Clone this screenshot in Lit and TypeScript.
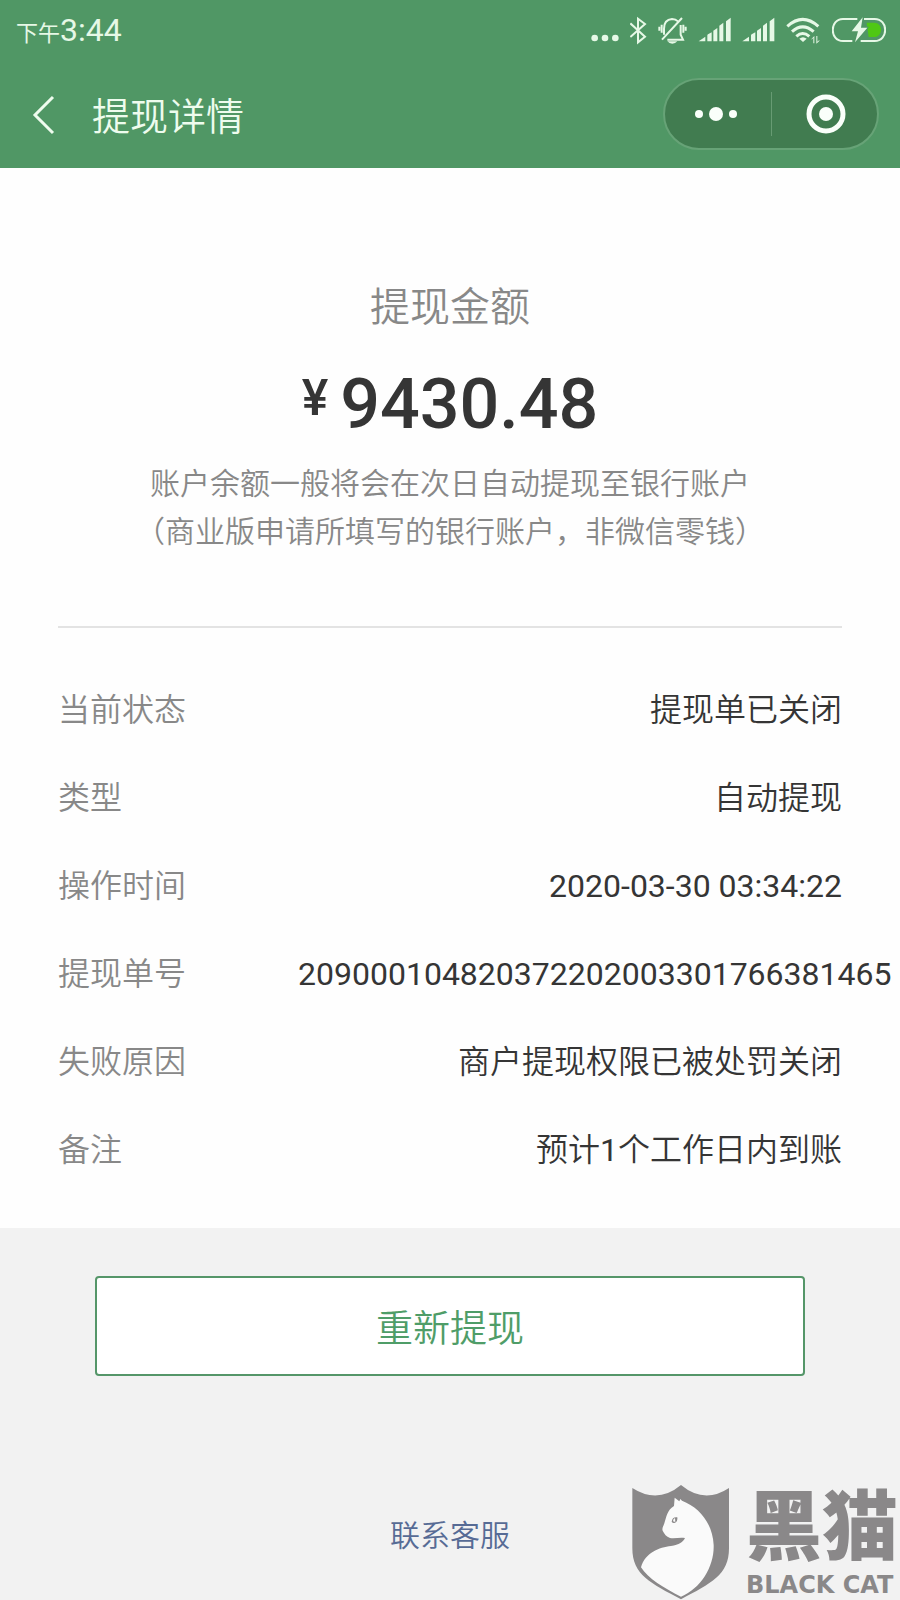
import { LitElement, html, css, svg } from "lit";
import type { TemplateResult } from "lit";
import { customElement } from "lit/decorators.js";

interface Detail {
  label: string;
  value: TemplateResult;
}

const num = (text: string) => html`<span class="num">${text}</span>`;

const DETAILS: Detail[] = [
  { label: "当前状态", value: html`提现单已关闭` },
  { label: "类型", value: html`自动提现` },
  { label: "操作时间", value: num("2020-03-30 03:34:22") },
  { label: "提现单号", value: num("209000104820372202003301766381465") },
  { label: "失败原因", value: html`商户提现权限已被处罚关闭` },
  { label: "备注", value: html`预计${num("1")}个工作日内到账` },
];

const signalBars = (x: number) => svg`
  <path d="M${x} 124 l20 -14 v14z"/>
  <path d="M${x + 26} 124 v-18 q0 -2 2 -3 l11 -6 v27z"/>
  <path d="M${x + 44} 124 v-32 l12 -8 v40z"/>
  <path d="M${x + 62} 124 v-47 l12 -9 v56z"/>
  <path d="M${x + 82} 124 v-60 l14 -11 v71z"/>`;

@customElement("status-bar")
export class StatusBar extends LitElement {
  static styles = css`
    :host {
      display: flex;
      align-items: center;
      justify-content: space-between;
      height: 60px;
      padding: 0 14px 0 16px;
      color: #e6f8e6;
    }
    .time {
      display: flex;
      align-items: baseline;
      padding-top: 4px;
      font-size: 32px;
      line-height: 36px;
    }
    .period {
      font-size: 22px;
    }
    .icons {
      display: flex;
      gap: 11px;
    }
    svg {
      display: block;
      height: 30px;
      fill: currentColor;
    }
    .line {
      fill: none;
      stroke: currentColor;
      stroke-width: 6;
    }
    .waves {
      fill: none;
      stroke: currentColor;
      stroke-width: 9;
    }
    .charge {
      fill: #4fc814;
    }
    .cut {
      stroke: #509765;
      stroke-width: 5;
    }
  `;

  render() {
    return html`
      <div class="time"><span class="period">下午</span><span>3:44</span></div>
      <div class="icons" aria-hidden="true">
        <svg width="28" viewBox="36 45 84 90">
          <circle cx="47" cy="114" r="10" /><circle cx="78" cy="114" r="10" /><circle cx="109" cy="114" r="10" />
        </svg>
        <svg width="17" viewBox="150 45 51 90">
          <path class="line" d="M151 70 L195 110 L174 127 V56 L195 72 L151 111" />
        </svg>
        <svg width="29" viewBox="234 45 87 90">
          <path class="line" d="M252 104 V86 C252 66 262 58 276 57 C284 57 290 60 294 64 M302 75 V104 L309 119 H262 M246 119 L306 54" />
          <path d="M262 124 H292 Q286 131 277 131 Q268 131 262 124z" />
          <path class="line" d="M245 74 V98 M238 80 V92 M310 74 V98 M317 80 V92" />
        </svg>
        <svg width="33" viewBox="351 45 99 90">${signalBars(353)}</svg>
        <svg width="33" viewBox="486 45 99 90">${signalBars(487)}</svg>
        <svg width="35" viewBox="618 45 105 90">
          <path class="waves" d="M622 79 Q668 37 715 79 M636 95 Q668 66 701 95 M649 109 Q668 92 688 109" />
          <path d="M658 116 Q669 107 680 116 L669 126z" />
          <path d="M700 130 V113 l-5 6 v-3 l8 -8 v22z M709 108 h3 v17 l6 -5 v3 l-9 8z" />
        </svg>
        <svg width="54" viewBox="756 45 162 90">
          <path class="charge" d="M860 68 H882 C910 68 910 111 882 111 H866z" />
          <path class="line" d="M832 57 H789 C748 57 748 123 789 123 H817 M852 57 H884 C926 57 926 123 884 123 H842" />
          <path class="cut" d="M848 52 L815 94 H834 L825 127 L862 83 H843z" />
          <path d="M848 52 L815 94 H834 L825 127 L862 83 H843z" />
        </svg>
      </div>
    `;
  }
}

@customElement("nav-bar")
export class NavBar extends LitElement {
  static styles = css`
    :host {
      display: flex;
      align-items: center;
      height: 108px;
      padding: 0 21px 0 24px;
      color: #eefcee;
    }
    button {
      border: 0;
      padding: 0;
      background: none;
      color: inherit;
    }
    svg {
      display: block;
    }
    .back {
      width: 40px;
      height: 48px;
    }
    .title {
      flex: 1;
      margin: 0 0 0 28px;
      padding-top: 6px;
      font-size: 38px;
      line-height: 48px;
      font-weight: 350;
    }
    .capsule {
      display: flex;
      align-items: center;
      box-sizing: border-box;
      width: 216px;
      height: 72px;
      border: 2px solid #67a377;
      border-radius: 36px;
      background: #417c50;
      color: #fafffa;
    }
    .capsule button {
      display: flex;
      flex: 1;
      justify-content: center;
    }
    .capsule .more {
      padding-right: 4px;
    }
    .capsule .exit {
      padding-left: 4px;
    }
    .divider {
      width: 1px;
      height: 44px;
      background: #679b73;
    }
  `;

  render() {
    return html`
      <button class="back" aria-label="返回">
        <svg width="40" height="48" viewBox="0 0 40 48" fill="none" stroke="currentColor" stroke-width="3">
          <path d="M29 7 L11 25 L29 43" />
        </svg>
      </button>
      <h1 class="title">提现详情</h1>
      <div class="capsule">
        <button class="more" aria-label="更多">
          <svg width="44" height="16" viewBox="0 0 44 16" fill="currentColor">
            <circle cx="5" cy="8" r="4" /><circle cx="22" cy="8" r="7" /><circle cx="39" cy="8" r="4" />
          </svg>
        </button>
        <span class="divider"></span>
        <button class="exit" aria-label="关闭">
          <svg width="40" height="40" viewBox="0 0 40 40" fill="currentColor">
            <circle cx="20" cy="20" r="17" fill="none" stroke="currentColor" stroke-width="5" />
            <circle cx="20" cy="20" r="7" />
          </svg>
        </button>
      </div>
    `;
  }
}

@customElement("black-cat-mark")
export class BlackCatMark extends LitElement {
  static styles = css`
    :host {
      display: flex;
      align-items: flex-start;
      gap: 16px;
      color: #8a8889;
    }
    svg {
      display: block;
    }
    .words {
      display: flex;
      flex-direction: column;
      white-space: nowrap;
    }
    .name {
      font-size: 76px;
      line-height: 86px;
      font-weight: 900;
    }
    .latin {
      font-family: "DejaVu Sans", sans-serif;
      font-size: 24px;
      line-height: 28px;
      font-weight: 700;
    }
  `;

  render() {
    return html`
      <svg width="99" height="115" viewBox="90 75 297 345" aria-hidden="true">
        <path
          fill="currentColor"
          d="M94 84 Q170 133 240 75 Q310 133 384 84 V265 C384 345 330 370 240 418 C150 370 94 345 94 265Z"
        />
        <path
          fill="#fafafa"
          d="M221 113 L235 124 L238 117 L243 122 C295 142 335 190 338 255 C340 320 300 385 240 410 C190 385 140 355 120 322 C132 278 175 262 210 258 C235 254 246 246 252 234 C235 232 222 236 207 234 C196 230 190 222 185 212 C182 204 188 198 190 190 C196 172 198 150 219 138Z"
        />
        <path fill="currentColor" d="M212 185 Q214 170 229 172 Q231 186 220 189 Q215 190 212 185Z" />
        <path fill="#fafafa" d="M216 184 Q216 176 222 174 L223 186Z" />
      </svg>
      <div class="words">
        <span class="name">黑猫</span>
        <span class="latin">BLACK CAT</span>
      </div>
    `;
  }
}

@customElement("app-root")
export class AppRoot extends LitElement {
  static styles = css`
    :host {
      display: flex;
      flex-direction: column;
      position: relative;
      min-height: 100vh;
      overflow: hidden;
      background: #f2f2f2;
      color: #353535;
      font-family: Roboto, "Noto Sans CJK SC", sans-serif;
    }
    .header {
      background: #509765;
    }
    .card {
      padding: 112px 58px 54px;
      background: #fefefe;
    }
    .summary {
      display: flex;
      flex-direction: column;
      align-items: center;
      padding-bottom: 70px;
      border-bottom: 2px solid #e3e3e3;
      color: #888;
      text-align: center;
    }
    .caption {
      margin: 0;
      font-size: 40px;
      line-height: 56px;
      font-weight: 350;
    }
    .amount {
      display: flex;
      align-items: flex-start;
      gap: 12px;
      margin: 26px 0 14px;
      color: #353535;
      font-weight: 500;
    }
    .currency {
      font-size: 50px;
      line-height: 72px;
    }
    .figure {
      font-size: 70px;
      line-height: 84px;
    }
    .note {
      margin: 0;
      font-size: 30px;
      line-height: 48px;
      font-weight: 350;
    }
    .details {
      display: flex;
      flex-direction: column;
      gap: 40px;
      margin: 58px 0 0;
      font-size: 32px;
      line-height: 48px;
      font-weight: 350;
    }
    .row {
      display: flex;
    }
    .row dt {
      flex: 0 0 240px;
      color: #888;
    }
    .row dd {
      flex: 1;
      min-width: 0;
      margin: 0;
      text-align: right;
      white-space: nowrap;
    }
    .num {
      font-weight: 400;
    }
    .actions {
      display: flex;
      flex-direction: column;
      align-items: center;
      padding: 48px 95px 24px;
    }
    .retry {
      width: 100%;
      height: 100px;
      border: 2px solid #559669;
      border-radius: 4px;
      background: #fff;
      color: #4f9d68;
      font-family: inherit;
      font-size: 37px;
      font-weight: 350;
    }
    .support {
      margin-top: 136px;
      color: #576b95;
      font-size: 30px;
      line-height: 48px;
      font-weight: 350;
      text-decoration: none;
    }
    .mark {
      position: absolute;
      right: 2px;
      bottom: 0;
    }
  `;

  render() {
    return html`
      <header class="header">
        <status-bar></status-bar>
        <nav-bar></nav-bar>
      </header>
      <main>
        <section class="card">
          <div class="summary">
            <h2 class="caption">提现金额</h2>
            <div class="amount"><span class="currency">¥</span><span class="figure">9430.48</span></div>
            <p class="note">账户余额一般将会在次日自动提现至银行账户<br />（商业版申请所填写的银行账户，非微信零钱）</p>
          </div>
          <dl class="details">
            ${DETAILS.map(
              (item) => html`<div class="row"><dt>${item.label}</dt><dd>${item.value}</dd></div>`
            )}
          </dl>
        </section>
        <div class="actions">
          <button class="retry">重新提现</button>
          <a class="support" href="#">联系客服</a>
        </div>
      </main>
      <black-cat-mark class="mark"></black-cat-mark>
    `;
  }
}
